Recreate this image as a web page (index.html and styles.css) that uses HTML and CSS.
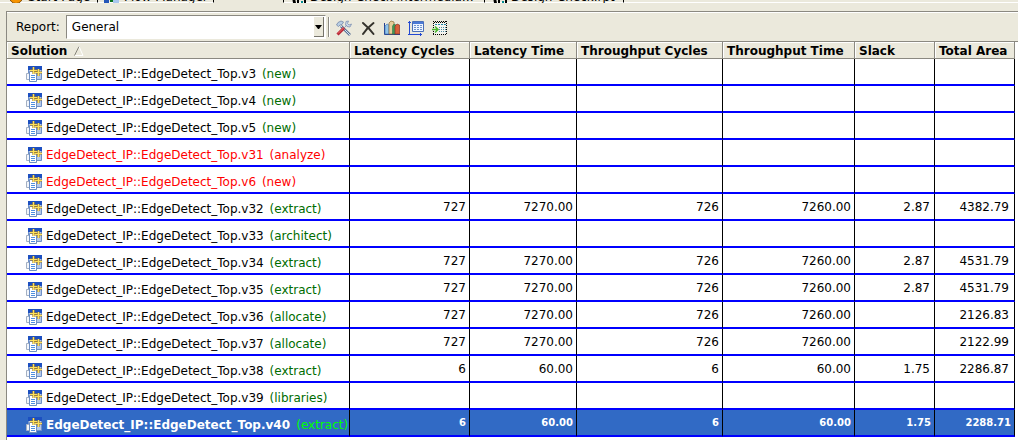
FILE: index.html
```html
<!DOCTYPE html>
<html lang="en">
<head>
<meta charset="utf-8">
<title>Solutions Report</title>
<link rel="stylesheet" href="styles.css">
</head>
<body>
<nav class="tabs" aria-label="Views">
  <button class="tab start"><svg class="tab-icon" viewBox="0 0 16 16"><circle cx="8" cy="8" r="6.500" fill="#f79400" stroke="#7d4700"/></svg><span>Start Page</span></button>
  <button class="tab flow"><svg class="tab-icon" viewBox="0 0 16 16"><path fill="#2456b8" d="M0 2h5v12H0z"/><path fill="#a9c7ee" d="M9 2h6v12H9z"/><path fill="#07701d" d="M6 8h3v5H6z"/></svg><span>Flow Manager</span></button>
  <button class="tab current" aria-label="Table"></button>
  <button class="tab inter"><svg class="tab-icon" viewBox="0 0 16 16"><path d="M1 2h3v3l2 9H3zM7 10h2v6H7zM14 10h2v6h-2z"/><path fill="#008b91" d="M11 12h2v4h-2z"/></svg><span>Design-Check Intermedia…</span></button>
  <button class="tab rpt"><svg class="tab-icon" viewBox="0 0 16 16"><path d="M1 2h3v3l2 9H3zM7 10h2v6H7zM14 10h2v6h-2z"/><path fill="#008b91" d="M11 12h2v4h-2z"/></svg><span>Design-Check.rpt</span></button>
</nav>
<main class="panel">
  <div class="toolbar">
    <label for="report">Report:</label>
    <div class="combo">
      <select id="report"><option>General</option></select>
      <span class="combo-arrow"><svg viewBox="0 0 7 4"><path d="M0 0h7L4 4H3z"/></svg></span>
    </div>
    <span class="divider"></span>
    <div class="tools">
      <button aria-label="Settings"><svg viewBox="0 0 16 16"><path d="M5 6l9 9" stroke="#5b7396" stroke-width="2.600"/><path d="M5 6l9 9" stroke="#d3e3f3"/><path d="M.5 5L2 2.500 5 1l2.500 1L6 4.500 4 5 2.500 6.500z" fill="#b9cfe4" stroke="#7386a8" stroke-width=".8"/><path d="M1.500 14.500L8 8" stroke="#b52234" stroke-width="3"/><path d="M2 13.500L8 7.500" stroke="#f2726c"/><path d="M8 8l3-3M10 1.500L9.500 5l1.500 1.500 3 .5 1.500-3-2.500 1-1.500-1.500L12.500 1z" fill="#c9d8ea" stroke="#7f92b2" stroke-width=".8"/></svg></button>
      <button aria-label="Delete"><svg viewBox="0 0 16 16"><path d="M3 3q6 5 10.500 11M13.500 3Q7 8 3 14" fill="none" stroke="#34322c" stroke-width="2" stroke-linecap="round"/></svg></button>
      <button aria-label="Bar chart"><svg viewBox="0 0 16 16"><path d="M.5 3v11.500H16" fill="none" stroke="#24408f"/><path d="M1 6l2-2 2 1v9H1z" fill="#8fc4ea" stroke="#3e6fae" stroke-width=".6"/><path d="M5 3l2-2 3 1v12H5z" fill="#e6cf9a" stroke="#8c6a34" stroke-width=".7"/><path d="M8.500 6L10 4l2 1v9H8.500z" fill="#3f9a58" stroke="#246c3c" stroke-width=".5"/><path d="M11 6l2-2 2.500 1v9H11z" fill="#d8603a" stroke="#8a3322" stroke-width=".7"/></svg></button>
      <button aria-label="Table view"><svg viewBox="0 0 16 16"><path d="M1.500 1v14M0 2.500h3M0 14.500h14M12.500 13v3" fill="none" stroke="#2449d2"/><path d="M4.500 1.500h11v10h-11z" fill="#eef5ff" stroke="#4a70b8"/><path d="M5 2h10v2H5z" fill="#4b7ad6"/><path d="M6 5.500h9M6 7.500h9M6 9.500h9" stroke="#6f93cc" stroke-dasharray="2 1"/></svg></button>
      <button aria-label="Select columns"><svg viewBox="0 0 16 16"><path d="M2 3h12v11H2z" fill="#f4f4ee"/><path d="M1 1.500h14M1 14.500h14M1.500 1v14M14.500 1v14" stroke="#000" stroke-dasharray="1 1"/><path d="M2 2.500h12" stroke="#000" stroke-dasharray="1 1"/><path d="M3 4.500h11" stroke="#2488a9" stroke-dasharray="2 1"/><path d="M7 7.500h7M7 9.500h7M7 11.500h7" stroke="#4f8fa6" stroke-dasharray="1 1"/><path d="M0 9.500h5M3 6.500l3 3-3 3" fill="none" stroke="#48b52c" stroke-width="1.500"/></svg></button>
    </div>
  </div>
  <table class="grid">
    <colgroup><col class="c-sol"><col class="c-lc"><col class="c-lt"><col class="c-tc"><col class="c-tt"><col class="c-small"><col class="c-small"></colgroup>
    <thead><tr><th>Solution <svg class="sort" viewBox="0 0 10 10"><path d="M.5 9.500L5 .5" stroke="#858379"/><path d="M5 .5l4 9H1" fill="none" stroke="#fff"/></svg></th><th>Latency Cycles</th><th>Latency Time</th><th>Throughput Cycles</th><th>Throughput Time</th><th>Slack</th><th>Total Area</th></tr></thead>
    <tbody id="rows"></tbody>
  </table>
</main>
<script src="app.js"></script>
</body>
</html>
```
FILE: styles.css
```css
* { box-sizing: border-box; }
body { margin: 0; background: #ebe9dc; font: 12px "DejaVu Sans", sans-serif; color: #000; min-height: 100vh; display: flex; flex-direction: column; }
button { border: 0; padding: 0; background: none; color: inherit; font: inherit; }
svg { display: block; }
.tabs { display: flex; height: 3px; overflow: hidden; align-items: flex-end; }
.tab { display: flex; flex: none; align-items: center; gap: 4px; height: 18px; padding-top: 7px; white-space: nowrap; border-right: 1px solid #000; border-bottom: 1px solid #fff; }
.tab-icon { width: 16px; height: 16px; }
.start { padding-left: 8px; width: 98px; }
.flow { padding-left: 6px; width: 116px; }
.current { width: 70px; border-bottom-color: #ebe9dc; }
.inter { padding-left: 6px; width: 201px; }
.rpt { padding-left: 6px; width: 139px; }
.tabs::after { content: ""; flex: 1; height: 1px; background: #fff; }
.panel { flex: 1; margin: 8px 0 0 6px; border-top: 1px solid #8b8981; border-left: 1px solid #8b8981; background: #fff; overflow: hidden; }
.toolbar { display: flex; align-items: center; height: 29px; margin-top: 1px; padding: 0 9px; background: #ebe9dc; border-bottom: 1px solid #8b8981; }
.combo { display: flex; width: 260px; height: 24px; margin-left: 6px; border: 1px solid #8b8981; border-right-color: #fff; border-bottom-color: #fff; background: #fff; position: relative; }
.combo select { appearance: none; flex: 1; border: 0; padding: 0 5px; background: #fff; color: #000; font: inherit; }
.combo-arrow { position: absolute; top: 1px; right: 1px; bottom: 1px; width: 10px; background: #ebe9dc; border-right: 1px solid #77756d; border-bottom: 1px solid #77756d; display: grid; place-items: center; pointer-events: none; }
.combo-arrow svg { width: 7px; height: 4px; }
.divider { width: 2px; height: 20px; margin-left: 2px; border-left: 1px solid #8b8981; border-right: 1px solid #fff; }
.tools { display: flex; gap: 8px; margin-left: 6px; padding-top: 2px; }
.tools svg { width: 16px; height: 16px; }
.grid { table-layout: fixed; border-collapse: separate; border-spacing: 0; width: 1008px; }
.c-sol { width: 343px; }
.c-lc { width: 120px; }
.c-lt { width: 107px; }
.c-tc { width: 146px; }
.c-tt { width: 132px; }
.c-small { width: 80px; }
th { height: 17px; padding: 2px 0 0 4px; line-height: 14px; text-align: left; white-space: nowrap; background: #ebe9dc; border-right: 1px solid #8b8981; border-bottom: 1px solid #8b8981; box-shadow: inset 1px 1px #fff; }
.sort { display: inline-block; width: 10px; height: 10px; margin-left: 3px; vertical-align: top; margin-top: 2px; }
td { height: 27px; padding: 0 3px 0 0; text-align: right; white-space: nowrap; border-bottom: 2px solid #00f; border-right: 1px solid #000; }
td:nth-child(6) { padding-right: 4px; }
td:last-child { padding-right: 5px; }
td:first-child { padding: 0 0 0 19px; }
.name { display: flex; align-items: center; gap: 4px; line-height: 16px; padding-top: 5px; }
.name svg { width: 16px; height: 16px; flex: none; }
.state { margin-left: 2px; color: #006c00; }
.failed, .failed .state { color: #f00; }
.selected { background: #316ac5; color: #fff; font-weight: bold; }
.selected td { font-size: 10px; padding-right: 3px; }
.selected td:first-child { font-size: 12px; padding-right: 0; }
.selected .state { color: #0f0; font-weight: normal; }
```
FILE: app.js
```js
const icon = `<svg viewBox="0 0 16 16"><path d="M2.500 .5h13v13h-13z" fill="#b4c8e8" stroke="#6f90c8"/><path d="M2 0h14v4H2z" fill="#1c4fc0"/><path d="M.5 7.500h6v6h-6z" fill="#f2f5fa" stroke="#a3b0c4"/><path d="M3.500 5.500h7v10h-7z" fill="#fff" stroke="#6d8fc4"/><path d="M5 9.500h4M5 11.500h4M5 13.500h4" stroke="#4f8fe0"/><path d="M7.500 1v7M4 4.500h7M12.500 3v7M9 6.500h7" stroke="#a07c28" stroke-width="2.200"/><path d="M7.500 1v7M4 4.500h7M12.500 3v7M9 6.500h7" stroke="#ffe25a" stroke-width="1.200"/></svg>`;
const none = ["", "", "", "", "", ""];
const data = [
  ["v3", "new", none],
  ["v4", "new", none],
  ["v5", "new", none],
  ["v31", "analyze", none, "failed"],
  ["v6", "new", none, "failed"],
  ["v32", "extract", ["727", "7270.00", "726", "7260.00", "2.87", "4382.79"]],
  ["v33", "architect", none],
  ["v34", "extract", ["727", "7270.00", "726", "7260.00", "2.87", "4531.79"]],
  ["v35", "extract", ["727", "7270.00", "726", "7260.00", "2.87", "4531.79"]],
  ["v36", "allocate", ["727", "7270.00", "726", "7260.00", "", "2126.83"]],
  ["v37", "allocate", ["727", "7270.00", "726", "7260.00", "", "2122.99"]],
  ["v38", "extract", ["6", "60.00", "6", "60.00", "1.75", "2286.87"]],
  ["v39", "libraries", none],
  ["v40", "extract", ["6", "60.00", "6", "60.00", "1.75", "2288.71"], "selected"]
];
document.getElementById("rows").innerHTML = data.map(([version, state, values, kind = ""]) =>
  `<tr class="${kind}"><td><div class="name">${icon}<span>EdgeDetect_IP::EdgeDetect_Top.${version} <span class="state">(${state})</span></span></div></td>${values.map(v => `<td>${v}</td>`).join("")}</tr>`
).join("");
```
